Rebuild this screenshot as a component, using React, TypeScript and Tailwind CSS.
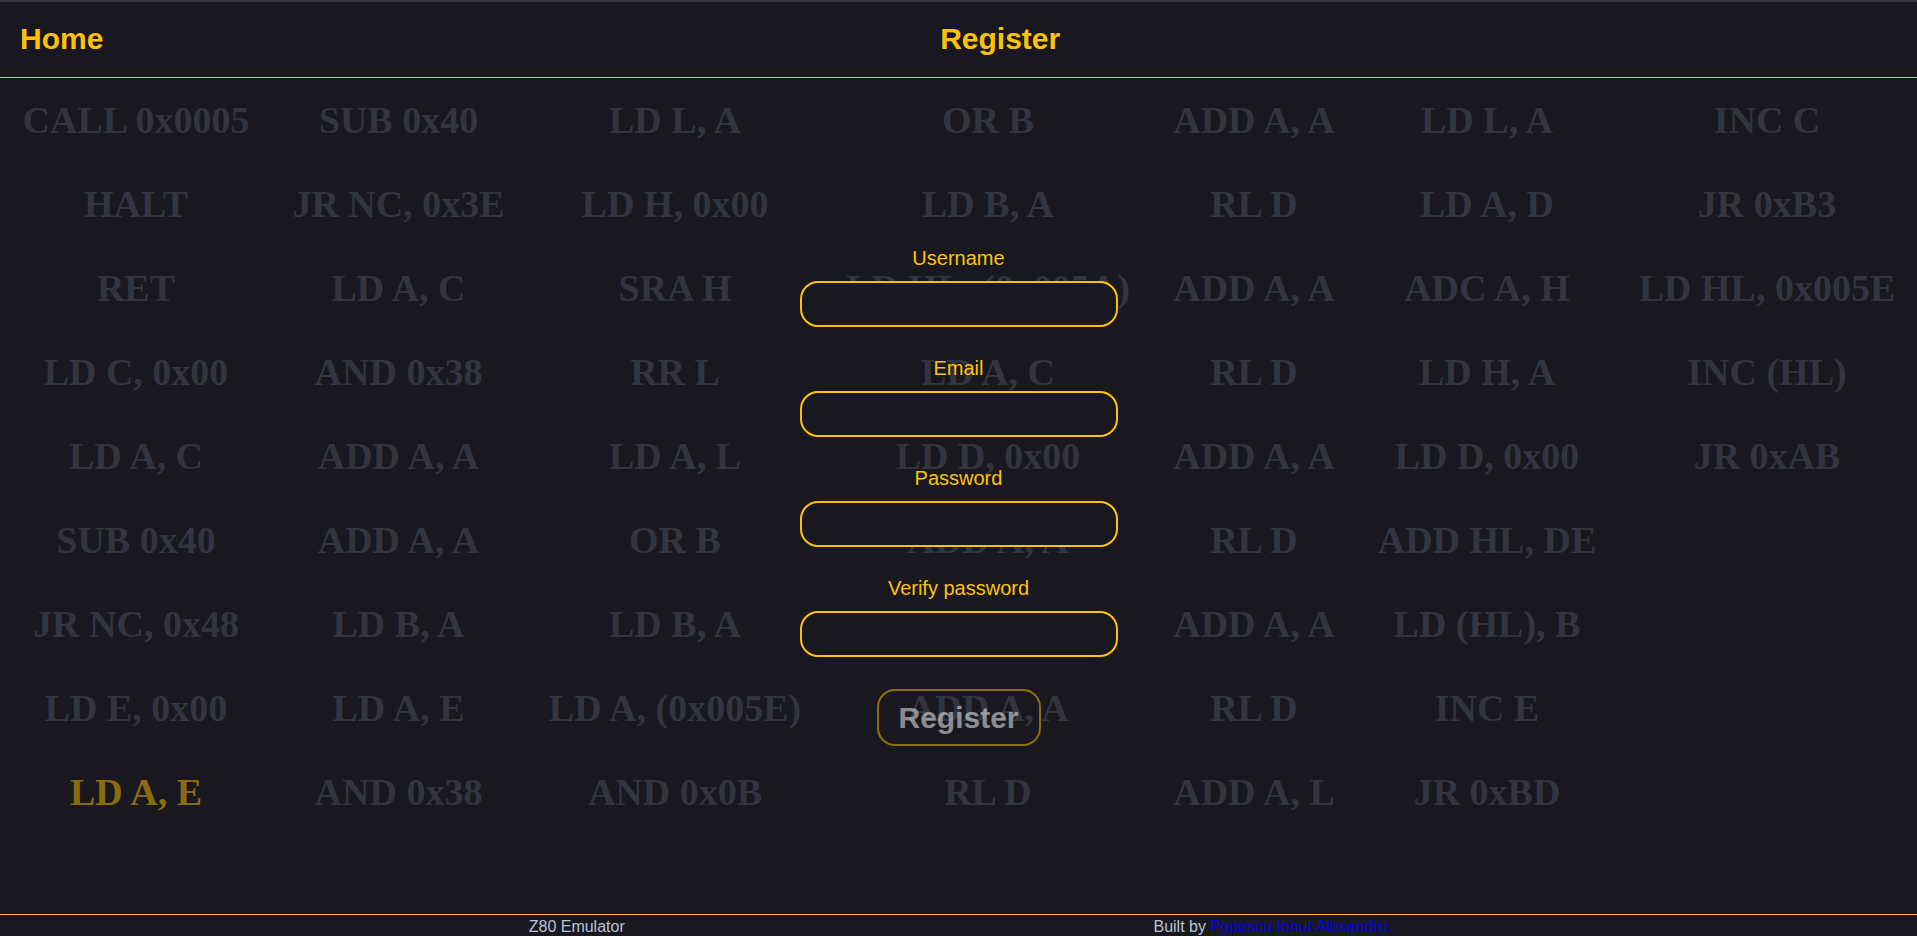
import { useState } from 'react';

// background program listing, rows of 7 (last rows leave the final column empty)
const program: string[][] = [
  ['CALL 0x0005', 'SUB 0x40', 'LD L, A', 'OR B', 'ADD A, A', 'LD L, A', 'INC C'],
  ['HALT', 'JR NC, 0x3E', 'LD H, 0x00', 'LD B, A', 'RL D', 'LD A, D', 'JR 0xB3'],
  ['RET', 'LD A, C', 'SRA H', 'LD HL, (0x005A)', 'ADD A, A', 'ADC A, H', 'LD HL, 0x005E'],
  ['LD C, 0x00', 'AND 0x38', 'RR L', 'LD A, C', 'RL D', 'LD H, A', 'INC (HL)'],
  ['LD A, C', 'ADD A, A', 'LD A, L', 'LD D, 0x00', 'ADD A, A', 'LD D, 0x00', 'JR 0xAB'],
  ['SUB 0x40', 'ADD A, A', 'OR B', 'ADD A, A', 'RL D', 'ADD HL, DE', ''],
  ['JR NC, 0x48', 'LD B, A', 'LD B, A', 'LD A, B', 'ADD A, A', 'LD (HL), B', ''],
  ['LD E, 0x00', 'LD A, E', 'LD A, (0x005E)', 'ADD A, A', 'RL D', 'INC E', ''],
  ['LD A, E', 'AND 0x38', 'AND 0x0B', 'RL D', 'ADD A, L', 'JR 0xBD', ''],
];

// the instruction currently being executed
const current = { row: 8, col: 0 };

const fields = [
  { name: 'username', label: 'Username', type: 'text' },
  { name: 'email', label: 'Email', type: 'email' },
  { name: 'password', label: 'Password', type: 'password' },
  { name: 'verify', label: 'Verify password', type: 'password' },
];

const App = () => {
  const [values, setValues] = useState<Record<string, string>>({
    username: '',
    email: '',
    password: '',
    verify: '',
  });

  const canSubmit =
    values.username !== '' &&
    values.email !== '' &&
    values.password !== '' &&
    values.password === values.verify;

  return (
    <div className="min-h-screen flex flex-col bg-[#19181f] font-['Liberation_Sans',Arial,sans-serif]">
      {/* Header */}
      <header className="h-[78px] flex items-center justify-between px-5 pb-[2px] border-t-2 border-b border-t-[#36363c] border-b-[#ffc107]">
        <a href="#" className="text-[30px] font-bold text-[#ffc107]">Home</a>
        <h1 className="text-[30px] font-bold text-[#ffc107]">Register</h1>
        <span />
      </header>

      {/* Main */}
      <main className="relative flex-1 overflow-hidden">
        <div className="grid grid-cols-[272px_253px_300px_326px_206px_260px_300px] auto-rows-[84px] items-center text-center font-['Liberation_Serif','Times_New_Roman',serif] text-[38px] font-bold select-none">
          {program.map((row, r) =>
            row.map((ins, c) => (
              <div
                key={`${r}-${c}`}
                className={`whitespace-nowrap ${
                  r === current.row && c === current.col ? 'text-[#8a6b10]' : 'text-[#32353e]'
                }`}
              >
                {ins}
              </div>
            ))
          )}
        </div>

        {/* Register form */}
        <div className="absolute inset-0 flex items-center justify-center">
          <form
            className="flex flex-col items-center"
            onSubmit={(e) => e.preventDefault()}
          >
            {fields.map((f, i) => (
              <div key={f.name} className={`flex flex-col items-center ${i > 0 ? 'mt-[30px]' : ''}`}>
                <label htmlFor={f.name} className="text-[20px] leading-[23px] text-[#ffc107]">
                  {f.label}
                </label>
                <input
                  id={f.name}
                  type={f.type}
                  value={values[f.name]}
                  onChange={(e) => setValues(prev => ({ ...prev, [f.name]: e.target.value }))}
                  className="mt-[11px] w-[318px] h-[46px] px-4 rounded-[18px] border-2 border-[#ffc107] bg-[#19181f] text-white text-[18px] outline-none"
                />
              </div>
            ))}
            <button
              type="submit"
              disabled={!canSubmit}
              className="mt-8 w-[164px] h-[57px] rounded-[18px] border-2 border-[#ffc107] bg-transparent text-white text-[30px] font-bold disabled:opacity-50"
            >
              Register
            </button>
          </form>
        </div>
      </main>

      {/* Footer */}
      <footer className="flex justify-evenly pt-[3px] border-t border-[#ffc107] text-[16px] leading-[18px] text-[#b9c3d8]">
        <span>Z80 Emulator</span>
        <span>
          Built by <a href="#" className="text-[#0000ee] underline">Popescu Ionut Alexandru</a>
        </span>
      </footer>
    </div>
  );
};

export default App;
